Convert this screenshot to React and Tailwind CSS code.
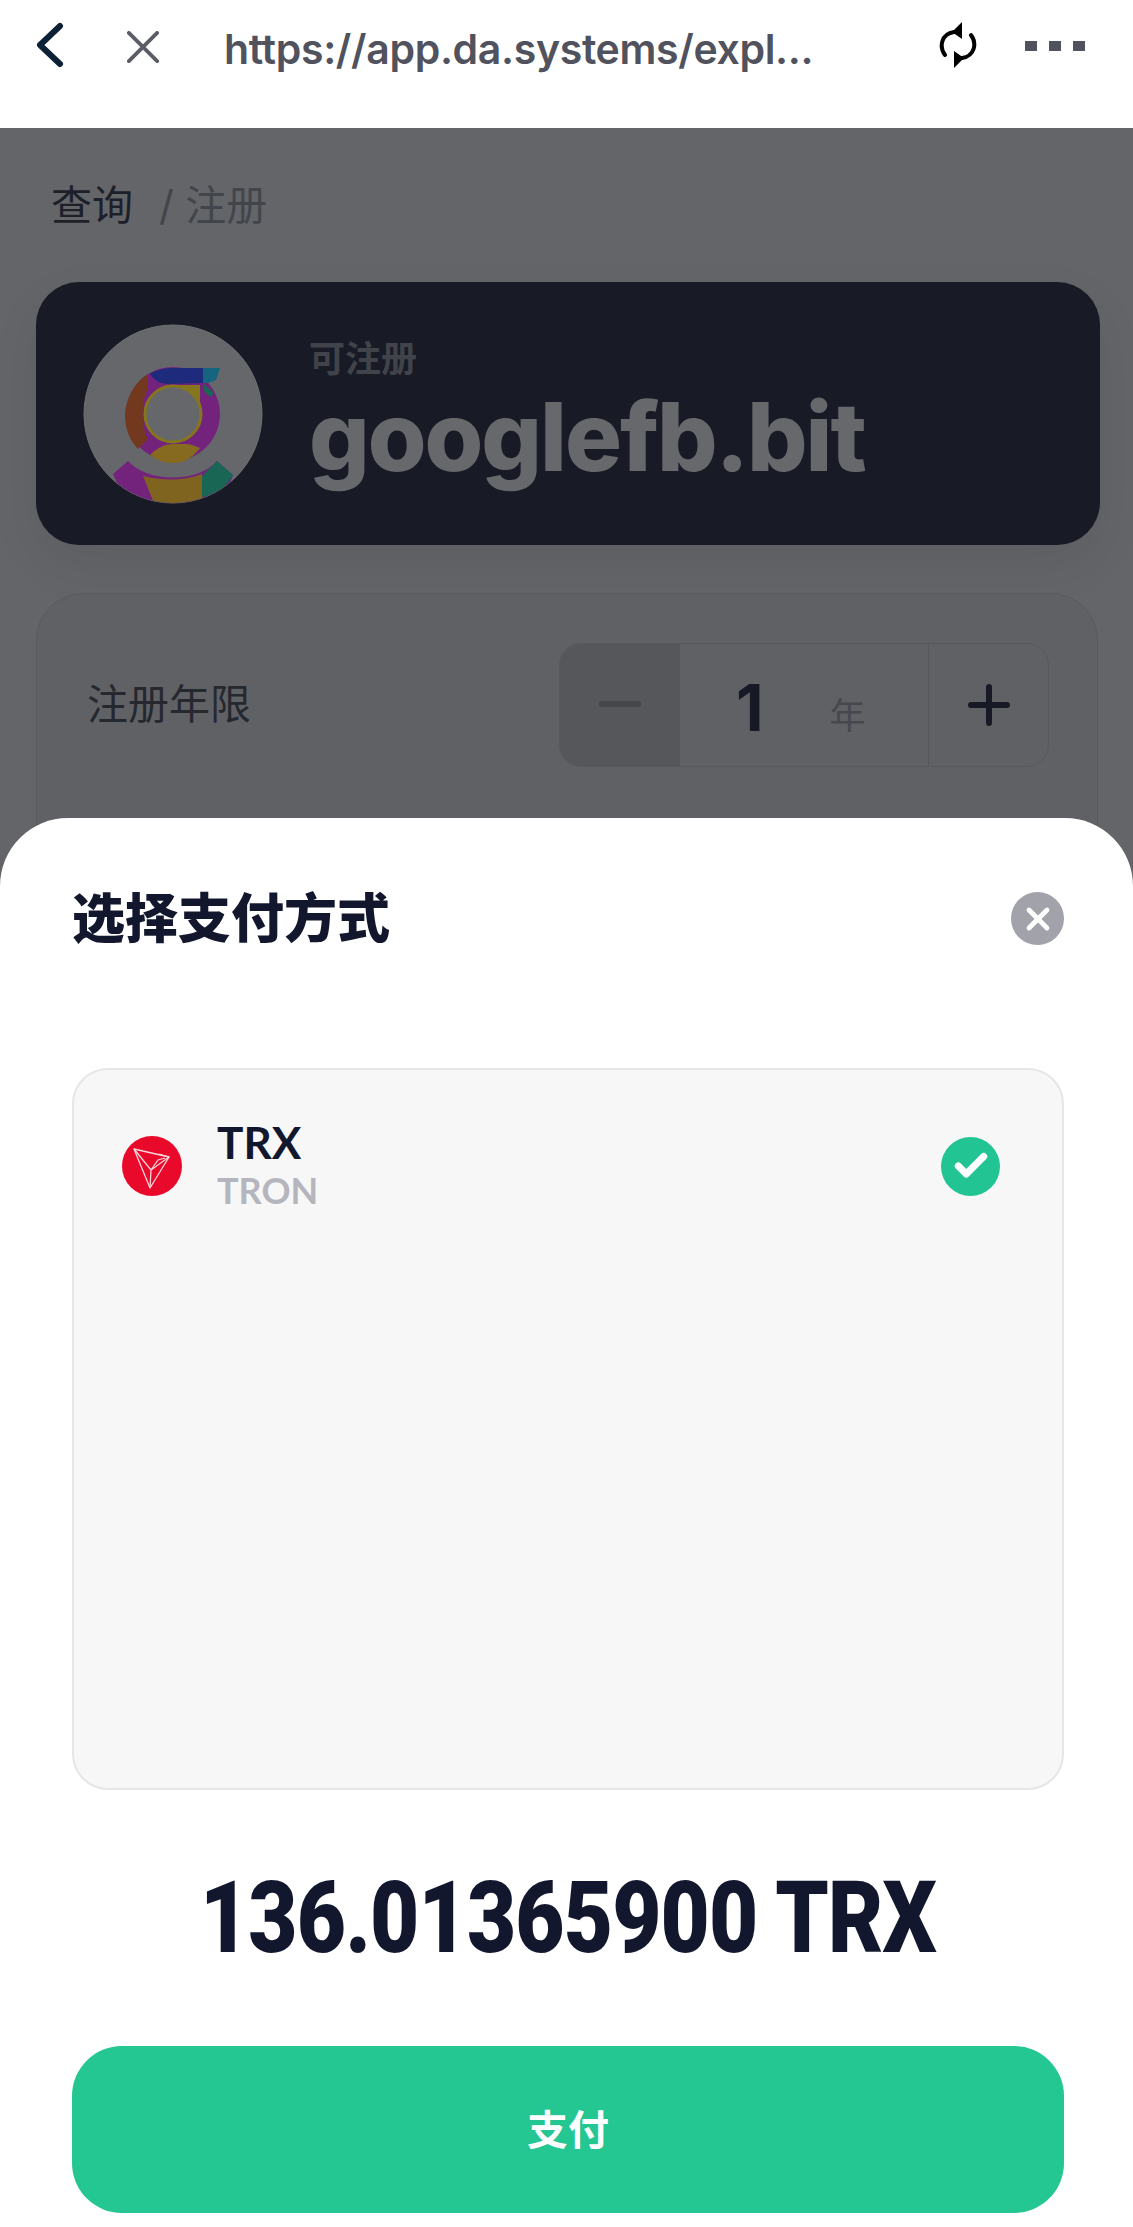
import { X, Check } from 'lucide-react'

function Logo() {
  return (
    <svg viewBox="-2 -2 210 210" className="w-[210px] h-[210px] shrink-0 -ml-[15px] -my-[15px]">
      <defs>
        <clipPath id="disc"><circle cx="103" cy="103" r="89" /></clipPath>
      </defs>
      <circle cx="103" cy="103" r="89" fill="#66676b" stroke="#707174" strokeWidth="1" />
      <g clipPath="url(#disc)">
        <path d="M43 163 L58 150 C78 172 128 172 147 150 L163 164 L150 200 L60 200 Z" fill="#74237c" />
        <path d="M73 165 C92 170 114 170 132 163 L132 192 L84 192 Z" fill="#7f641f" />
        <path d="M132 165 L147 150 L163 164 C155 178 145 184 132 186 Z" fill="#1a6655" />
      </g>
      <path fill="#74237c" fillRule="evenodd" d="M103 56 A47 47 0 1 1 102.9 56 Z M103 76 A27 27 0 1 0 103.1 76 Z" />
      <path d="M78 63 C66 70 56 86 55 104 C55 118 60 130 68 138 L78 128 C72 120 70 90 78 78 Z" fill="#73391f" />
      <path d="M80 63 C88 58 96 57 104 57 L133 57 L133 72 L98 73 C90 73 84 69 80 63 Z" fill="#1e2a7c" />
      <path d="M133 57 L150 57 L146 69 L138 72 L133 72 Z" fill="#156480" />
      <path d="M134 73 L144 82 L140 86 L134 80 Z" fill="#1a6655" />
      <path d="M100 74 L130 74 L130 92 C122 82 112 76 100 74 Z" fill="#84761c" />
      <circle cx="103" cy="103" r="28" fill="#66676b" stroke="#84761c" strokeWidth="3" />
      <path d="M80 144 C88 136 96 133 103 133 L118 133 C122 134 126 135 130 137 C122 148 112 152 103 152 C94 152 86 149 80 144 Z" fill="#856a20" />
    </svg>
  )
}

function Refresh() {
  return (
    <svg viewBox="0 0 38 46" className="w-[38px] h-[46px]" fill="none" stroke="#000" strokeWidth="4" strokeLinecap="round">
      <path d="M6 33 C0 25 2 12 15 10 L20 10" />
      <path d="M32 13 C38 21 36 34 23 36 L18 36" />
      <path d="M23 0 L13 10 L23 17 Z" fill="#000" stroke="none" />
      <path d="M15 46 L25 36 L15 29 Z" fill="#000" stroke="none" />
    </svg>
  )
}

function TronIcon() {
  return (
    <span className="w-[60px] h-[60px] rounded-full bg-[#e9092a] shrink-0">
      <svg viewBox="0 0 60 60" className="w-[60px] h-[60px]" fill="none" stroke="#fbd5da" strokeWidth="1.3" strokeLinejoin="round">
        <path d="M12 13 L47 21 L28 52 Z" />
        <path d="M12 13 L29 34 L28 52" />
        <path d="M29 34 L47 21 L37 18" />
        <path d="M29 34 L36 24 L43 22" />
      </svg>
    </span>
  )
}

export default function App() {
  return (
    <div className="relative w-[1133px] h-[2227px] overflow-hidden bg-white font-['Inter','Noto_Sans_CJK_SC',sans-serif]">
      {/* webview toolbar */}
      <header className="h-[128px] bg-white flex items-start pt-[22px] pl-[34px] pr-[45px]">
        <svg viewBox="0 0 30 46" className="w-[30px] h-[46px] shrink-0" fill="none" stroke="#0d2136" strokeWidth="6" strokeLinecap="round" strokeLinejoin="round">
          <path d="M26 4 L6 23 L26 42" />
        </svg>
        <svg viewBox="0 0 34 34" className="w-[32px] h-[32px] ml-[63px] mt-[9px] shrink-0" fill="none" stroke="#5a5c66" strokeWidth="4" strokeLinecap="round">
          <path d="M2 2 L32 32 M32 2 L2 32" />
        </svg>
        <div className="ml-[65px] mt-[3px] w-[600px] text-[41px] leading-[48px] font-semibold text-[#50525e] tracking-[-0.35px] whitespace-nowrap">
          https://app.da.systems/expl...
        </div>
        <div className="ml-[115px]"><Refresh /></div>
        <div className="ml-[48px] mt-[19px] flex gap-[12px]">
          <span className="w-[12px] h-[10px] bg-[#50525e]" />
          <span className="w-[12px] h-[10px] bg-[#50525e]" />
          <span className="w-[12px] h-[10px] bg-[#50525e]" />
        </div>
      </header>

      {/* dimmed register page */}
      <main className="h-[2099px] bg-[#646569] px-[36px]">
        <div className="h-[154px] pt-[50px] pl-[15px] flex items-start text-[41px] leading-[54px]">
          <span className="text-[#1d2029]">查询</span>
          <span className="ml-[26px] text-[#43454c]">/ 注册</span>
        </div>
        <section className="h-[263px] w-[1064px] rounded-[43px] bg-[#181b25] flex items-center pl-[47px] shadow-[0_20px_50px_rgba(0,0,0,0.07)]">
          <Logo />
          <div className="ml-[31px]">
            <div className="text-[36px] leading-[40px] font-bold text-[#41434a] mt-[4px]">可注册</div>
            <div className="text-[95px] leading-[110px] font-extrabold text-[#66686c] tracking-[-2px] mt-[3px]">googlefb.bit</div>
          </div>
        </section>
        <section className="mt-[48px] w-[1062px] h-[600px] rounded-[47px] border border-[#595a5e] bg-[#606165] pt-[49px] pl-[50px] pr-[48px]">
          <div className="flex items-center justify-between">
            <span className="text-[41px] text-[#26282f]">注册年限</span>
            <div className="w-[490px] h-[124px] rounded-[22px] border border-[#58595d] flex overflow-hidden">
              <div className="w-[120px] bg-[#56575b] flex items-center justify-center">
                <span className="w-[42px] h-[6px] rounded-full bg-[#46474c] -mt-[3px]" />
              </div>
              <div className="flex-1 flex items-start pl-[56px] pt-[26px]">
                <span className="text-[64px] leading-[76px] font-bold text-[#171a24]">1</span>
                <span className="ml-[66px] mt-[24px] text-[36px] leading-[44px] text-[#47484e]">年</span>
              </div>
              <div className="w-[120px] border-l border-[#56575b] flex items-center justify-center">
                <svg viewBox="0 0 42 42" className="w-[42px] h-[42px] -mt-[1px]" fill="none" stroke="#171a24" strokeWidth="6" strokeLinecap="round">
                  <path d="M3 21 L39 21 M21 3 L21 39" />
                </svg>
              </div>
            </div>
          </div>
        </section>
      </main>

      {/* payment sheet */}
      <div className="absolute left-0 right-0 top-[818px] bottom-0 bg-white rounded-t-[68px] px-[72px]">
        <div className="flex items-start justify-between pt-[74px] -mr-[3px]">
          <h2 className="-mt-[7px] text-[53px] leading-[60px] font-black text-[#12172e] font-['Noto_Sans_CJK_SC',sans-serif]">选择支付方式</h2>
          <span className="w-[53px] h-[53px] rounded-full bg-[#a1a2aa] flex items-center justify-center">
            <X size={36} color="#fff" strokeWidth={3.2} />
          </span>
        </div>
        <div className="mt-[123px] w-[992px] h-[722px] rounded-[36px] border-2 border-[#e6e6e8] bg-[#f7f7f8] pt-[50px] pl-[48px] pr-[62px]">
          <div className="flex items-center">
            <TronIcon />
            <div className="ml-[35px] -mt-[2px] font-['Lato',sans-serif]">
              <div className="text-[44px] leading-[48px] font-bold text-[#12172e]">TRX</div>
              <div className="text-[36px] leading-[44px] font-bold text-[#b4b5bd] mt-[2px]">TRON</div>
            </div>
            <span className="ml-auto w-[59px] h-[59px] rounded-full bg-[#22c493] flex items-center justify-center">
              <Check size={38} color="#fff" strokeWidth={4.5} />
            </span>
          </div>
        </div>
        <div className="mt-[73px] h-[110px] flex items-center justify-center">
          <span className="inline-block whitespace-nowrap text-[100px] leading-[110px] font-black text-[#12172e] font-['Roboto',sans-serif] scale-x-[0.85] tracking-[-1px] translate-x-[1px]">136.01365900 TRX</span>
        </div>
        <button className="mt-[73px] w-[992px] h-[167px] pb-[4px] rounded-[50px] bg-[#24c692] text-white text-[41px] font-bold font-['Noto_Sans_CJK_SC',sans-serif] flex items-center justify-center">
          支付
        </button>
      </div>
    </div>
  )
}
